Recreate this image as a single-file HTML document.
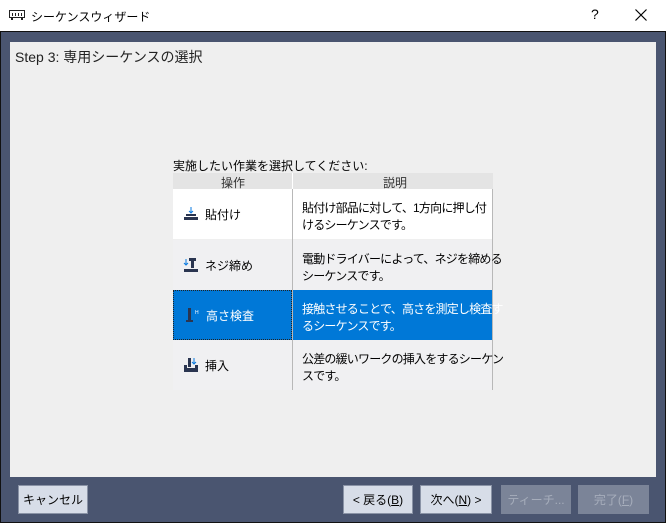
<!DOCTYPE html>
<html><head><meta charset="utf-8"><style>
*{margin:0;padding:0;box-sizing:border-box}
body{width:666px;height:523px;position:relative;overflow:hidden;background:#fff;font-family:"Liberation Sans","Noto Sans CJK JP",sans-serif;font-size:12px;color:#000}
.abs{position:absolute}
.btn{position:absolute;top:485px;height:29px;background:#d7dde8;border:1px solid #8a93a6;font-size:12px;display:flex;align-items:center;justify-content:center;color:#000}
.dis{background:#7b8498;border-color:#7b8498;color:#a6adbb}
.row{position:absolute;left:173px;width:319px;height:50px}
.c1{position:absolute;left:0;top:0;width:119px;height:50px;display:flex;align-items:center;padding-left:10px}
.c2{position:absolute;left:120px;top:0;width:199px;height:50px;padding:11px 0 0 9px;line-height:17px;letter-spacing:-0.8px;white-space:nowrap}
.ic{width:16px;height:16px;margin-right:6px}
</style></head><body>
<div class="abs" style="left:0;top:0;width:666px;height:31px;background:#fff"></div>
<svg class="abs" style="left:9px;top:10px" width="16" height="11"><rect x="0.5" y="0.5" width="15" height="7" fill="none" stroke="#222"/><rect x="3" y="3" width="1" height="3" fill="#222"/><rect x="6" y="3" width="1" height="3" fill="#222"/><rect x="9" y="3" width="1" height="3" fill="#222"/><rect x="12" y="3" width="1" height="3" fill="#222"/><rect x="2" y="8" width="2" height="2" fill="#222"/><rect x="12" y="8" width="2" height="2" fill="#222"/></svg>
<div class="abs" style="left:31px;top:8px;font-size:12px">シーケンスウィザード</div>
<div class="abs" style="left:591px;top:6px;font-size:14px">?</div>
<svg class="abs" style="left:635px;top:9px" width="12" height="12"><path d="M0.5 0.5L11.5 11.5M11.5 0.5L0.5 11.5" stroke="#000" stroke-width="1.2"/></svg>
<div class="abs" style="left:0;top:31px;width:666px;height:492px;background:#4a5570;border:1px solid #111"></div>
<div class="abs" style="left:10px;top:42px;width:646px;height:435px;background:#efefef"></div>
<div class="abs" style="left:15px;top:47px;font-size:14px;color:#222">Step 3: 専用シーケンスの選択</div>
<div class="abs" style="left:173px;top:157px;font-size:12px">実施したい作業を選択してください:</div>
<div class="abs" style="left:173px;top:173px;width:320px;height:16px;background:#e4e4e4;color:#333"><span class="abs" style="left:48px;top:1px">操作</span><span class="abs" style="left:210px;top:1px">説明</span><div class="abs" style="left:119px;top:0;width:1px;height:16px;background:#fff"></div></div>
<div class="abs" style="left:492px;top:189px;width:1px;height:201px;background:#b8b8b8"></div>
<div class="row" style="top:189px;background:#fff"><div class="c1"><svg class="ic" viewBox="0 0 16 16"><path d="M8 1v6M6 5l2 2 2-2" stroke="#0a7ae0" fill="none"/><rect x="3" y="8" width="10" height="2" fill="#2a3550"/><rect x="1" y="11" width="14" height="3" fill="#2a3550"/></svg>貼付け</div><div class="c2">貼付け部品に対して、1方向に押し付<br>けるシーケンスです。</div></div>
<div class="row" style="top:240px;background:#f0f0f2"><div class="c1"><svg class="ic" viewBox="0 0 16 16"><path d="M3 2v6M1 6l2 2 2-2" stroke="#0a7ae0" fill="none"/><rect x="6" y="1" width="7" height="3" fill="#2a3550"/><rect x="8" y="4" width="3" height="7" fill="#2a3550"/><rect x="1" y="12" width="14" height="3" fill="#2a3550"/></svg>ネジ締め</div><div class="c2">電動ドライバーによって、ネジを締める<br>シーケンスです。</div></div>
<div class="row" style="top:290px;background:#0078d7;color:#fff"><div class="c1" style="border:1px dotted #222"><svg class="ic" viewBox="0 0 16 16"><rect x="4" y="1" width="3" height="13" fill="#2a3550"/><rect x="2" y="13" width="7" height="2" fill="#2a3550"/><text x="11" y="7" font-size="5" fill="#fff">H</text></svg>高さ検査</div><div class="c2">接触させることで、高さを測定し検査す<br>るシーケンスです。</div></div>
<div class="row" style="top:340px;background:#f0f0f2"><div class="c1"><svg class="ic" viewBox="0 0 16 16"><path d="M11 1v6M9 5l2 2 2-2" stroke="#0a7ae0" fill="none"/><rect x="5" y="1" width="3" height="9" fill="#2a3550"/><path d="M1 8h3v3h8V8h3v7H1z" fill="#2a3550"/></svg>挿入</div><div class="c2">公差の緩いワークの挿入をするシーケン<br>スです。</div></div>
<div class="abs" style="left:292px;top:189px;width:1px;height:201px;background:#b8b8b8"></div>
<div class="btn" style="left:18px;width:70px">キャンセル</div>
<div class="btn" style="left:343px;width:70px">&lt; 戻る(<u>B</u>)</div>
<div class="btn" style="left:420px;width:72px">次へ(<u>N</u>) &gt;</div>
<div class="btn dis" style="left:501px;width:70px">ティーチ...</div>
<div class="btn dis" style="left:578px;width:71px">完了(<u>F</u>)</div>
</body></html>
